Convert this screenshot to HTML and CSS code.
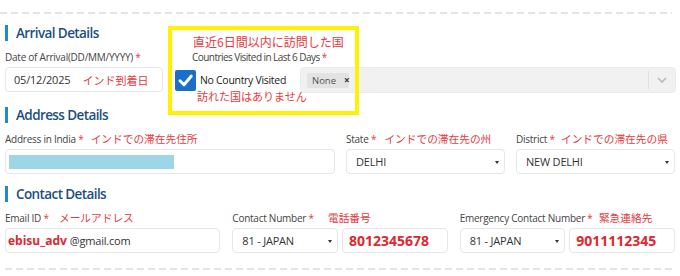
FILE: index.html
```html
<!DOCTYPE html>
<html lang="ja">
<head>
<meta charset="utf-8">
<title>Arrival form</title>
<link rel="stylesheet" href="styles.css">
</head>
<body>
<div class="page">
  <div class="dash"></div>
  <div class="content">
    <section class="sec sec-arrival">
      <h2 class="sec-title">Arrival Details</h2>
      <div class="row arrival-row">
        <div class="field f-date">
          <label class="lbl">Date of Arrival(DD/MM/YYYY) <span class="req">*</span></label>
          <div class="input"><span class="val">05/12/2025</span><span class="jp jp-inline">インド到着日</span></div>
        </div>
        <div class="field f-countries">
          <div class="hl-box"></div>
          <span class="jp jp-note">直近6日間以内に訪問した国</span>
          <label class="lbl lbl-countries">Countries Visited in Last 6 Days <span class="req">*</span></label>
          <div class="countries-ctrl">
            <div class="check-wrap">
              <span class="cbox"><svg width="21" height="21" viewBox="0 0 21 21"><path d="M5 10.8 L9 14.8 L16.2 6.2" fill="none" stroke="#fff" stroke-width="3" stroke-linecap="round" stroke-linejoin="round"/></svg></span>
              <span class="cb-text">No Country Visited</span>
              <span class="jp jp-under">訪れた国はありません</span>
            </div>
            <div class="multi">
              <span class="tag"><span class="tag-txt">None</span><span class="tag-x">×</span></span>
              <span class="multi-ind"><svg width="10" height="6" viewBox="0 0 10 6"><path d="M1 1 L5 5 L9 1" fill="none" stroke="#b8b8b8" stroke-width="1.6"/></svg></span>
            </div>
          </div>
        </div>
      </div>
    </section>

    <section class="sec sec-address">
      <h2 class="sec-title">Address Details</h2>
      <div class="row address-row">
        <div class="field">
          <label class="lbl">Address in India <span class="req">*</span><span class="jp jp-lbl m7">インドでの滞在先住所</span></label>
          <div class="input"><span class="redact"></span></div>
        </div>
        <div class="field">
          <label class="lbl">State <span class="req">*</span><span class="jp jp-lbl m8">インドでの滞在先の州</span></label>
          <div class="input select"><span class="val">DELHI</span><span class="caret"></span></div>
        </div>
        <div class="field">
          <label class="lbl">District <span class="req">*</span><span class="jp jp-lbl m6">インドでの滞在先の県</span></label>
          <div class="input select"><span class="val">NEW DELHI</span><span class="caret"></span></div>
        </div>
      </div>
    </section>

    <section class="sec sec-contact">
      <h2 class="sec-title">Contact Details</h2>
      <div class="row contact-row">
        <div class="field">
          <label class="lbl">Email ID <span class="req">*</span><span class="jp jp-lbl m10">メールアドレス</span></label>
          <div class="input email"><span class="red-bold">ebisu_adv</span><span class="val">@gmail.com</span></div>
        </div>
        <div class="field">
          <label class="lbl">Contact Number <span class="req">*</span><span class="jp jp-lbl m14">電話番号</span></label>
          <div class="pair">
            <div class="input select code"><span class="val">81 - JAPAN</span><span class="caret"></span></div>
            <div class="input phone"><span class="red-num">8012345678</span></div>
          </div>
        </div>
        <div class="field">
          <label class="lbl">Emergency Contact Number <span class="req">*</span><span class="jp jp-lbl m6">緊急連絡先</span></label>
          <div class="pair">
            <div class="input select code"><span class="val">81 - JAPAN</span><span class="caret"></span></div>
            <div class="input phone"><span class="red-num">9011112345</span></div>
          </div>
        </div>
      </div>
    </section>
  </div>
  <div class="dash dash-bottom"></div>
</div>
</body>
</html>
```

FILE: styles.css
```css
* { box-sizing: border-box; }
html, body { margin: 0; padding: 0; background: #fff; }
body {
  font-family: "Open Sans", "Noto Sans", sans-serif;
  color: #333;
}
.page { width: 680px; height: 276px; overflow: hidden; }
.dash {
  height: 2px;
  margin: 12px 8px 0 0;
  background: repeating-linear-gradient(90deg, #e4e4e4 0 7px, transparent 7px 11px);
}
.dash-bottom { margin: 15px 8px 0 5px; }
.content { padding: 0 5px 0 5px; }

.sec-title {
  margin: 0;
  font-size: 13.5px;
  font-weight: 600;
  letter-spacing: -0.6px;
  line-height: 16px;
  color: #1d4f7f;
  border-left: 3px solid #2389c9;
  padding-left: 8px;
}
.sec-arrival { margin-top: 11px; }
.sec-address { margin-top: 14px; }
.sec-contact { margin-top: 12px; }

.row { margin-top: 9px; }
.field { display: flex; flex-direction: column; gap: 3px; min-width: 0; }
.lbl {
  display: block;
  font-size: 10px;
  letter-spacing: -0.25px;
  line-height: 14px;
  height: 14px;
  color: #444;
  white-space: nowrap;
}
.req { color: #e0363c; letter-spacing: 0; }

.jp {
  font-family: "Noto Sans CJK JP", sans-serif;
  color: #e63a40;
  font-size: 10.7px;
  letter-spacing: 0;
  white-space: nowrap;
}
.m6 { margin-left: 6px; }
.m7 { margin-left: 7px; }
.m8 { margin-left: 8px; }
.m10 { margin-left: 10px; }
.m14 { margin-left: 14px; }

.input {
  height: 25px;
  border: 1px solid #e6e6e6;
  border-radius: 4px;
  background: #fff;
  display: flex;
  align-items: center;
  padding: 0 8px;
  font-size: 11px;
  letter-spacing: -0.2px;
  color: #333;
  white-space: nowrap;
  position: relative;
}
.select .caret {
  position: absolute;
  right: 5px;
  top: 11px;
  width: 0; height: 0;
  border-left: 2.5px solid transparent;
  border-right: 2.5px solid transparent;
  border-top: 3px solid #333;
}

/* arrival */
.arrival-row { display: flex; gap: 12px; }
.f-date { width: 158px; flex: none; }
.jp-inline { margin-left: 12px; font-size: 11px; }
.f-countries { flex: 1; position: relative; }
.lbl-countries { padding-left: 17px; letter-spacing: -0.55px; }
.hl-box {
  position: absolute;
  left: -7px; top: -24px;
  width: 191px; height: 89px;
  border: 4px solid #fff200;
  z-index: 2;
  pointer-events: none;
}
.jp-note {
  position: absolute;
  left: 18px; top: -14px;
  font-size: 12px;
  line-height: 12px;
  z-index: 3;
}
.countries-ctrl { display: flex; align-items: center; height: 26px; }
.check-wrap {
  width: 125px; flex: none;
  display: flex; align-items: center;
  position: relative;
  height: 26px;
}
.cbox {
  width: 21px; height: 21px;
  background: #1a6fc9;
  border-radius: 2px;
  display: block;
  flex: none;
}
.cbox svg { display: block; }
.cb-text { margin-left: 4px; font-size: 10.5px; letter-spacing: -0.3px; color: #222; white-space: nowrap; }
.jp-under {
  position: absolute;
  left: 22px; top: 22px;
  font-size: 11px;
  line-height: 14px;
  z-index: 3;
}
.multi {
  flex: 1;
  height: 26px;
  margin-right: -1px;
  background: #f1f1f1;
  border: 1px solid #ebebeb;
  border-radius: 4px;
  display: flex;
  align-items: center;
  padding-left: 6px;
}
.tag {
  height: 15px;
  width: 42px;
  background: #e3e3e3;
  border-radius: 2px;
  display: flex;
  align-items: center;
  padding-left: 5px;
  font-size: 9.5px;
  color: #555;
}
.tag-x { margin-left: 8px; font-size: 10px; font-weight: 700; color: #333; }
.multi-ind {
  margin-left: auto;
  width: 27px;
  height: 18px;
  border-left: 1px solid #e0e0e0;
  display: flex;
  align-items: center;
  justify-content: center;
}
.multi-ind svg { display: block; }

/* address */
.address-row { display: grid; grid-template-columns: 330px 159px 1fr; column-gap: 11px; }
.address-row .input { padding-left: 3px; }
.address-row .select { padding-left: 9px; }
.redact { display: block; width: 165px; height: 14px; background: #9dd6e6; }

/* contact */
.contact-row { display: grid; grid-template-columns: 1fr 1fr 1fr; column-gap: 12px; }
.email { padding-left: 2px; }
.red-bold { color: #e1262e; font-weight: 700; font-size: 12px; letter-spacing: 0; margin-right: 3px; }
.pair { display: grid; grid-template-columns: 1fr 1fr; column-gap: 4px; }
.code { padding-left: 9px; }
.phone { padding-left: 6px; }
.red-num { color: #e1262e; font-weight: 700; font-size: 14px; letter-spacing: 0; }
```
